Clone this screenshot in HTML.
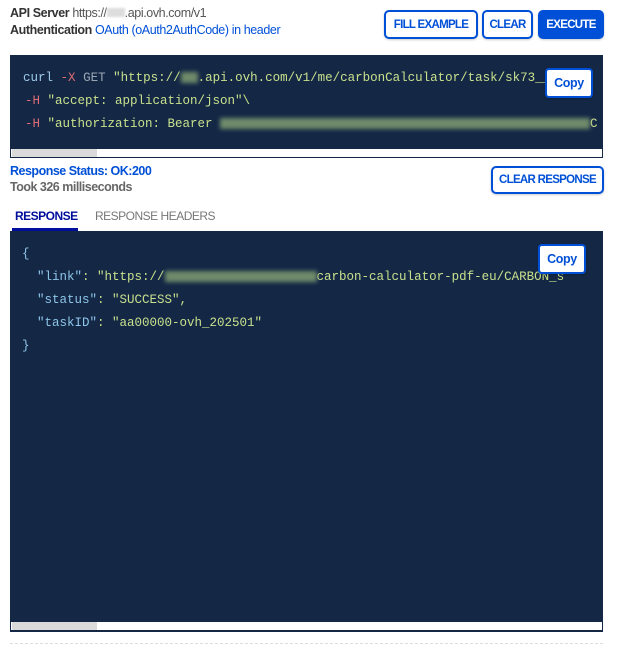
<!DOCTYPE html>
<html><head><style>
body{margin:0;background:#fff;width:619px;height:649px;position:relative;font-family:"Liberation Sans",sans-serif;overflow:hidden}
.a{position:absolute}
.lbl{font-size:12.5px;font-weight:bold;color:#333;letter-spacing:-0.4px}
.btn{position:absolute;border:2px solid #0050d7;border-radius:5px;background:#fff;color:#0050d7;font-weight:bold;font-size:11.5px;letter-spacing:-0.7px;display:flex;align-items:center;justify-content:center;box-sizing:border-box;box-shadow:0 1px 2px rgba(0,0,0,.2)}
.code{position:absolute;background:#142846;font-family:"Liberation Mono",monospace;font-size:12.5px;color:#c8e08c;white-space:pre;overflow:hidden;border:0 solid #142846;box-sizing:border-box}
.sb{position:absolute;background:#fff;height:8px}
.sb i{position:absolute;left:1px;top:0;height:8px;background:#dadada}
.blur{display:inline-block;background:#6f8a6a;filter:blur(2px);height:11px;vertical-align:middle}
.r{color:#e06c75}.g{color:#9aa5b1}.c{color:#9ec8e8}.k{color:#8ec5e8}
</style></head><body>
<div class="a lbl" style="left:10px;top:6px">API Server <span style="font-weight:normal;color:#555">https://<span style="display:inline-block;width:18px;height:9px;background:#ddd;filter:blur(1px)"></span>.api.ovh.com/v1</span></div>
<div class="a lbl" style="left:10px;top:23px">Authentication <span style="font-weight:normal;color:#0050d7">OAuth (oAuth2AuthCode) in header</span></div>
<div class="btn" style="left:384px;top:10px;width:94px;height:29px">FILL EXAMPLE</div>
<div class="btn" style="left:482px;top:10px;width:51px;height:29px">CLEAR</div>
<div class="btn" style="left:538px;top:10px;width:66px;height:29px;background:#0050d7;color:#fff">EXECUTE</div>

<div class="code" style="left:10px;top:55px;width:593px;height:103px;border-bottom-width:1px"><div class="a" style="left:13px;top:16px"><span class="c">curl</span> <span class="r">-X</span> <span class="g">GET</span> "https://<span class="blur" style="width:17px"></span>.api.ovh.com/v1/me/carbonCalculator/task/sk73__h_</div><div class="a" style="left:15px;top:39px"><span class="r">-H</span> "accept: application/json"\</div><div class="a" style="left:15px;top:62px"><span class="r">-H</span> "authorization: Bearer <span class="blur" style="width:370px"></span>C</div><div class="sb" style="left:1px;top:94px;width:591px"><i style="width:85px"></i></div></div>
<div class="btn" style="left:545px;top:68px;width:48px;height:30px;border-radius:4px;font-size:12.5px;letter-spacing:-0.4px">Copy</div>

<div class="a" style="left:10px;top:164px;font-size:12.5px;font-weight:bold;color:#0050d7;letter-spacing:-0.5px">Response Status: OK:200</div>
<div class="a" style="left:10px;top:180px;font-size:12.5px;font-weight:bold;color:#666;letter-spacing:-0.5px">Took 326 milliseconds</div>
<div class="btn" style="left:491px;top:166px;width:113px;height:28px">CLEAR RESPONSE</div>
<div class="a" style="left:15px;top:209px;font-size:12px;font-weight:bold;color:#000e9c;letter-spacing:-0.5px">RESPONSE</div>
<div class="a" style="left:12px;top:228px;width:66px;height:3px;background:#000e9c"></div>
<div class="a" style="left:95px;top:209px;font-size:12px;color:#777;letter-spacing:-0.5px">RESPONSE HEADERS</div>

<div class="code" style="left:10px;top:231px;width:593px;height:401px;border-bottom-width:1px"><div class="a" style="left:12px;top:16px"><span class="k">{</span></div><div class="a" style="left:12px;top:39px">  <span class="k">"link"</span>: "https://<span class="blur" style="width:152px"></span>carbon-calculator-pdf-eu/CARBON_s</div><div class="a" style="left:12px;top:62px">  <span class="k">"status"</span>: "SUCCESS",</div><div class="a" style="left:12px;top:85px">  <span class="k">"taskID"</span>: "aa00000-ovh_202501"</div><div class="a" style="left:12px;top:108px"><span class="k">}</span></div><div class="sb" style="left:1px;top:391px;width:591px"><i style="width:85px"></i></div></div>
<div class="btn" style="left:538px;top:244px;width:48px;height:30px;border-radius:4px;font-size:12.5px;letter-spacing:-0.4px">Copy</div>
<div class="a" style="left:10px;top:643px;width:593px;border-top:1px dashed #ddd"></div>
</body></html>
